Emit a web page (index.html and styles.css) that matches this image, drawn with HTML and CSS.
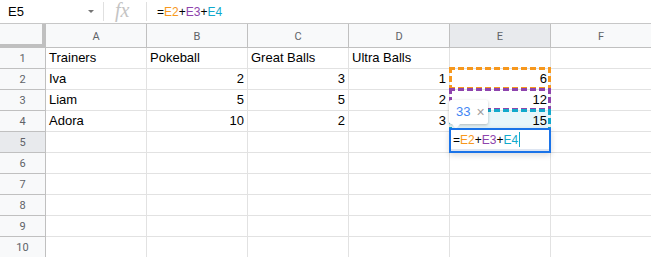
FILE: index.html
```html
<!DOCTYPE html>
<html lang="en">
<head>
    <meta charset="UTF-8">
    <meta name="viewport" content="width=device-width, initial-scale=1.0">
    <title>Pokeballs sheet</title>
    <link rel="stylesheet" href="styles.css">
</head>
<body>
    <div class="formula-bar">
        <div class="name-box">
            <span>E5</span>
            <span class="caret"></span>
        </div>
        <div class="fx">fx</div>
        <div class="formula">=<span class="r-orange">E2</span>+<span class="r-purple">E3</span>+<span class="r-cyan">E4</span></div>
    </div>

    <div class="sheet">
        <div class="corner"></div>
        <div class="col-head">A</div>
        <div class="col-head">B</div>
        <div class="col-head">C</div>
        <div class="col-head">D</div>
        <div class="col-head active">E</div>
        <div class="col-head">F</div>

        <div class="row-head">1</div>
        <div class="cell">Trainers</div>
        <div class="cell">Pokeball</div>
        <div class="cell">Great Balls</div>
        <div class="cell">Ultra Balls</div>
        <div class="cell"></div>
        <div class="cell"></div>

        <div class="row-head">2</div>
        <div class="cell">Iva</div>
        <div class="cell num">2</div>
        <div class="cell num">3</div>
        <div class="cell num">1</div>
        <div class="cell num ref ref-orange">6</div>
        <div class="cell"></div>

        <div class="row-head">3</div>
        <div class="cell">Liam</div>
        <div class="cell num">5</div>
        <div class="cell num">5</div>
        <div class="cell num">2</div>
        <div class="cell num ref ref-purple">12</div>
        <div class="cell"></div>

        <div class="row-head">4</div>
        <div class="cell">Adora</div>
        <div class="cell num">10</div>
        <div class="cell num">2</div>
        <div class="cell num">3</div>
        <div class="cell num ref ref-cyan">15</div>
        <div class="cell"></div>

        <div class="row-head active">5</div>
        <div class="cell"></div>
        <div class="cell"></div>
        <div class="cell"></div>
        <div class="cell"></div>
        <div class="cell edit-cell">
            <!-- tooltip with the live result, sits above the editor -->
            <div class="result-tip">
                <span class="tip-value">33</span>
                <span class="tip-close">×</span>
            </div>
            <div class="editor">
                =<span class="r-orange">E2</span>+<span class="r-purple">E3</span>+<span class="r-cyan">E4</span><span class="cursor"></span>
            </div>
        </div>
        <div class="cell"></div>

        <div class="row-head">6</div>
        <div class="cell"></div><div class="cell"></div><div class="cell"></div><div class="cell"></div><div class="cell"></div><div class="cell"></div>
        <div class="row-head">7</div>
        <div class="cell"></div><div class="cell"></div><div class="cell"></div><div class="cell"></div><div class="cell"></div><div class="cell"></div>
        <div class="row-head">8</div>
        <div class="cell"></div><div class="cell"></div><div class="cell"></div><div class="cell"></div><div class="cell"></div><div class="cell"></div>
        <div class="row-head">9</div>
        <div class="cell"></div><div class="cell"></div><div class="cell"></div><div class="cell"></div><div class="cell"></div><div class="cell"></div>
        <div class="row-head">10</div>
        <div class="cell"></div><div class="cell"></div><div class="cell"></div><div class="cell"></div><div class="cell"></div><div class="cell"></div>
    </div>
</body>
</html>
```

FILE: styles.css
```css
* {
    box-sizing: border-box;
}
body {
    margin: 0;
    width: 651px;
    height: 257px;
    overflow: hidden;
    background-color: #fff;
    font-family: "Liberation Sans", Arial, sans-serif;
    color: #000;
}

/* formula bar */
.formula-bar {
    display: flex;
    align-items: center;
    height: 24px;
    border-bottom: 1px solid #c7c7c7;
}
.name-box {
    display: flex;
    align-items: center;
    justify-content: space-between;
    width: 104px;
    height: 19px;
    padding: 0 9px 0 8px;
    border-right: 1px solid #e0e0e0;
    font-size: 13px;
}
.caret {
    width: 0;
    height: 0;
    border-left: 3px solid transparent;
    border-right: 3px solid transparent;
    border-top: 3px solid #757575;
}
.fx {
    width: 43px;
    height: 19px;
    padding-left: 11px;
    border-right: 1px solid #e0e0e0;
    font-family: "Liberation Serif", serif;
    font-style: italic;
    font-size: 20px;
    line-height: 17px;
    color: #c4c4c4;
}
.formula {
    padding-left: 10px;
    font-size: 12px;
    padding-top: 1px;
}

.r-orange { color: #f7981d; }
.r-purple { color: #8e44ad; }
.r-cyan { color: #11a9cc; }

/* grid */
.sheet {
    display: grid;
    grid-template-columns: 46px repeat(6, 101px);
    grid-template-rows: 24px;
    grid-auto-rows: 21px;
}
.corner {
    background-color: #f8f9fa;
    border-right: 4px solid #c0c0c0;
    border-bottom: 4px solid #c0c0c0;
}
.col-head,
.row-head {
    display: flex;
    align-items: center;
    justify-content: center;
    background-color: #f8f9fa;
    border-right: 1px solid #c0c0c0;
    border-bottom: 1px solid #c0c0c0;
    font-family: Roboto, "Liberation Sans", sans-serif;
    font-size: 11px;
    color: #5f6368;
}
.col-head {
    padding-top: 1px;
}
.col-head.active,
.row-head.active {
    background-color: #e8eaed;
}
.cell {
    position: relative;
    padding: 0 3px;
    border-right: 1px solid #e2e2e2;
    border-bottom: 1px solid #e2e2e2;
    font-size: 13px;
    line-height: 20px;
    white-space: nowrap;
}
.cell.num {
    text-align: right;
}

/* referenced ranges: dashed frame, 6px dash / 3px gap */
.ref::after {
    content: "";
    position: absolute;
    top: -2px;
    left: -1px;
    right: -1px;
    bottom: -1px;
    background:
        repeating-linear-gradient(90deg, var(--ref) 0 6px, transparent 6px 9px) top / 100% 3px no-repeat,
        repeating-linear-gradient(90deg, var(--ref) 0 6px, transparent 6px 9px) bottom / 100% 3px no-repeat,
        repeating-linear-gradient(180deg, var(--ref) 0 6px, transparent 6px 9px) left / 3px 100% no-repeat,
        repeating-linear-gradient(180deg, var(--ref) 0 6px, transparent 6px 9px) right / 3px 100% no-repeat;
}
.ref-orange { --ref: #f7981d; }
.ref-purple { --ref: #8e44ad; }
.ref-cyan {
    --ref: #11a9cc;
    background-color: #e7f6fa;
}

/* editing E5 */
.edit-cell {
    z-index: 2;
}
.editor {
    position: absolute;
    top: -4px;
    left: -1px;
    width: 102px;
    height: 25px;
    padding: 1px 0 0 2px;
    border: 2px solid #1a73e8;
    background-color: #fff;
    box-shadow: 0 2px 6px rgba(0, 0, 0, 0.15), inset 0 -2px 0 #dde5f2;
    font-size: 12px;
    line-height: 18px;
}
.cursor {
    display: inline-block;
    width: 1px;
    height: 15px;
    margin-left: 1px;
    vertical-align: -3px;
    background-color: #11a9cc;
}
.result-tip {
    position: absolute;
    top: -32px;
    left: -1px;
    display: flex;
    align-items: center;
    gap: 6px;
    width: 39px;
    height: 24px;
    padding-left: 7px;
    background-color: #fff;
    border-radius: 2px;
    box-shadow: 0 1px 3px rgba(0, 0, 0, 0.25);
    font-size: 13px;
}
.result-tip::after {
    content: "";
    position: absolute;
    left: 3px;
    bottom: -5px;
    border-left: 4px solid transparent;
    border-right: 4px solid transparent;
    border-top: 5px solid #fff;
}
.tip-value {
    color: #4285f4;
}
.tip-close {
    color: #9e9e9e;
    font-size: 14px;
}
```
